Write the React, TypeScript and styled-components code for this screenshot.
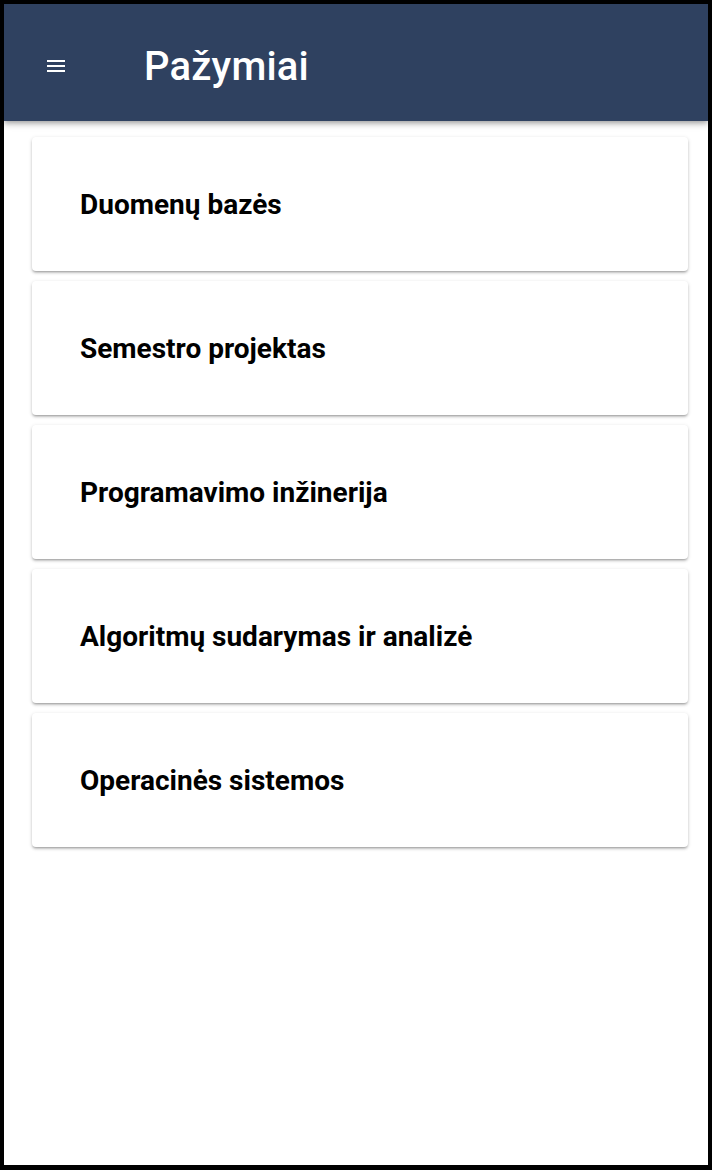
import React from "react";
import styled, { createGlobalStyle } from "styled-components";

const Global = createGlobalStyle`
  html, body { margin: 0; padding: 0; background: #000; }
  * { box-sizing: border-box; }
`;

const Frame = styled.div`
  width: 712px;
  height: 1170px;
  border-style: solid;
  border-color: #000;
  border-width: 4px 4px 5px 4px;
  background: #fff;
  display: flex;
  flex-direction: column;
  font-family: Roboto, "Noto Sans", sans-serif;
  overflow: hidden;
`;

const Header = styled.header`
  height: 117px;
  flex: none;
  background: #2f4160;
  display: flex;
  align-items: center;
  padding-top: 7px;
  box-shadow: 0 2px 4px -1px rgba(0,0,0,0.2), 0 4px 5px 0 rgba(0,0,0,0.14), 0 1px 10px 0 rgba(0,0,0,0.12);
  position: relative;
  z-index: 1;
`;

const MenuButton = styled.button`
  width: 48px;
  height: 48px;
  margin-left: 28px;
  padding: 0;
  border: none;
  background: transparent;
  display: flex;
  align-items: center;
  justify-content: center;
  color: #fff;
`;

const Title = styled.h1`
  margin: 0 0 0 64px;
  color: #fff;
  font-size: 40px;
  font-weight: 500;
  letter-spacing: 0.2px;
`;

const List = styled.main`
  display: flex;
  flex-direction: column;
  gap: 10px;
  padding: 16px 20px 0 28px;
`;

const Card = styled.div`
  height: 134px;
  background: #fff;
  border-radius: 4px;
  box-shadow: 0 2px 2px -1px rgba(0,0,0,0.2), 0 2px 3px 0 rgba(0,0,0,0.14), 0 1px 4px 0 rgba(0,0,0,0.12);
  display: flex;
  align-items: center;
  padding-left: 48px;
`;

const CardTitle = styled.h2`
  margin: 0;
  font-size: 28px;
  font-weight: 700;
  color: #000;
`;

const subjects = [
  "Duomenų bazės",
  "Semestro projektas",
  "Programavimo inžinerija",
  "Algoritmų sudarymas ir analizė",
  "Operacinės sistemos",
];

export default function App() {
  return (
    <>
      <Global />
      <Frame>
        <Header>
          <MenuButton aria-label="menu">
            <svg width="24" height="24" viewBox="0 0 24 24" fill="currentColor">
              <path d="M3 18h18v-2H3v2zm0-5h18v-2H3v2zm0-7v2h18V6H3z" />
            </svg>
          </MenuButton>
          <Title>Pažymiai</Title>
        </Header>
        <List>
          {subjects.map((s) => (
            <Card key={s}>
              <CardTitle>{s}</CardTitle>
            </Card>
          ))}
        </List>
      </Frame>
    </>
  );
}
